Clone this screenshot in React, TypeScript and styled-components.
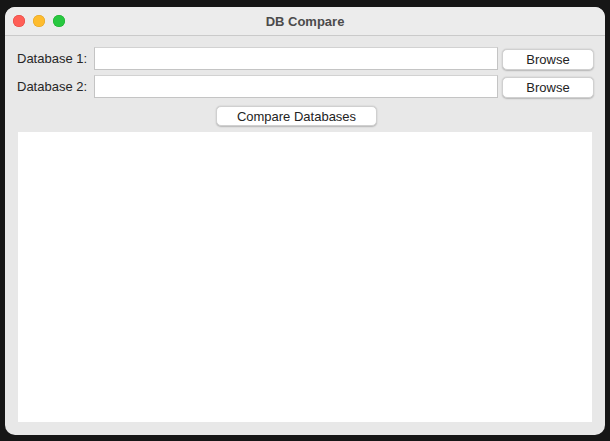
import React from "react";
import styled, { createGlobalStyle } from "styled-components";

const Global = createGlobalStyle`
  html, body { margin: 0; padding: 0; background: #161616; }
  body { font-family: "Liberation Sans", Arial, sans-serif; }
  * { box-sizing: border-box; }
`;

const Screen = styled.div`
  width: 610px;
  height: 441px;
  padding: 7px 5px 6px 5px;
  background: #161616;
`;

const Window = styled.div`
  width: 600px;
  height: 428px;
  border-radius: 10px;
  overflow: hidden;
  background: #e8e8e8;
  display: flex;
  flex-direction: column;
`;

const TitleBar = styled.div`
  position: relative;
  height: 29px;
  flex: none;
  background: #ececec;
  border-bottom: 1px solid #cacaca;
  display: flex;
  align-items: center;
  justify-content: center;
`;

const Lights = styled.div`
  position: absolute;
  left: 8px;
  top: 8px;
  display: flex;
  gap: 8px;
`;

const Light = styled.span<{ $c: string; $b: string }>`
  width: 12px;
  height: 12px;
  border-radius: 50%;
  background: ${(p) => p.$c};
  box-shadow: inset 0 0 0 0.5px ${(p) => p.$b};
`;

const Title = styled.div`
  font-size: 13px;
  font-weight: 700;
  color: #4b4b4b;
  margin-top: 1px;
`;

const Content = styled.div`
  flex: 1;
  display: flex;
  flex-direction: column;
  padding: 11px 11px 13px 12px;
  min-height: 0;
`;

const Form = styled.div`
  display: grid;
  grid-template-columns: 73px 1fr 92px;
  column-gap: 4px;
  row-gap: 5px;
`;

const Label = styled.label`
  font-size: 13px;
  color: #262626;
  align-self: center;
  white-space: nowrap;
  line-height: 23px;
`;

const Input = styled.div`
  height: 23px;
  background: #ffffff;
  border: 1px solid #c4c4c4;
  border-top-color: #d2d2d2;
`;

const Button = styled.button<{ $w?: number }>`
  height: 21px;
  width: ${(p) => (p.$w ? `${p.$w}px` : "auto")};
  align-self: end;
  background: #ffffff;
  border: 0.5px solid #d0d0d0;
  border-radius: 5px;
  box-shadow: 0 0.5px 1.5px rgba(0, 0, 0, 0.22);
  font-family: "Liberation Sans", Arial, sans-serif;
  font-size: 13px;
  color: #232323;
  padding: 0;
  margin-bottom: 0.5px;
`;

const Center = styled.div`
  display: flex;
  justify-content: center;
  margin-top: 8px;
  height: 20px;
  padding-right: 18px;
`;

const CompareButton = styled(Button)`
  height: 20px;
  margin: 0;
`;

const Output = styled.div`
  flex: 1;
  margin: 6px 2px 0 1px;
  background: #ffffff;
`;

export default function App() {
  return (
    <>
      <Global />
      <Screen>
        <Window>
          <TitleBar>
            <Lights>
              <Light $c="#ff5f57" $b="#e0443e" />
              <Light $c="#febc2e" $b="#dea123" />
              <Light $c="#28c840" $b="#1aab29" />
            </Lights>
            <Title>DB Compare</Title>
          </TitleBar>
          <Content>
            <Form>
              <Label>Database 1:</Label>
              <Input />
              <Button>Browse</Button>
              <Label>Database 2:</Label>
              <Input />
              <Button>Browse</Button>
            </Form>
            <Center>
              <CompareButton $w={161}>Compare Databases</CompareButton>
            </Center>
            <Output />
          </Content>
        </Window>
      </Screen>
    </>
  );
}
